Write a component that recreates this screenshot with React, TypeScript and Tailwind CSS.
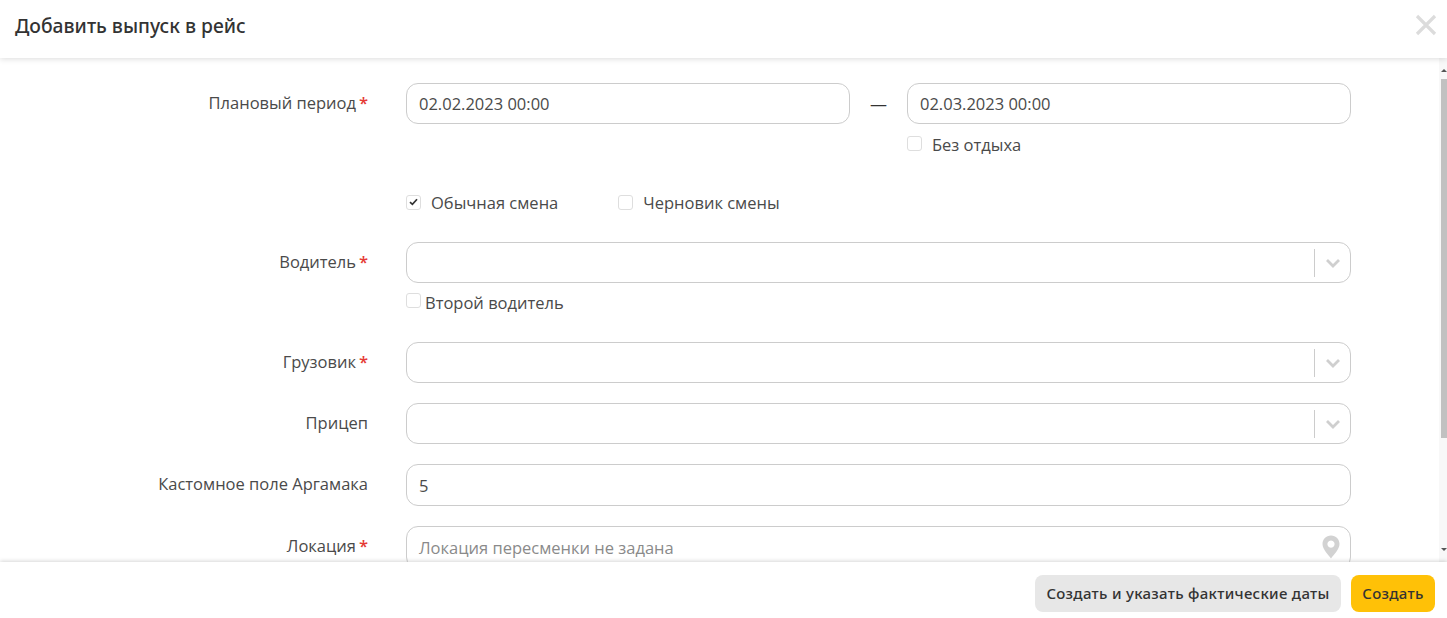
import React from "react";

const font = { fontFamily: '"Open Sans", "Noto Sans", sans-serif' };

function Label({ text, required }: { text: string; required?: boolean }) {
  return (
    <div className="w-[369px] shrink-0 h-[41px] flex items-center justify-end pr-[1px] text-[16.5px] text-[#4a4a4a]">
      <span>{text}</span>
      {required && <span className="ml-[3px] text-[#e53935] w-[9px] font-semibold">*</span>}
    </div>
  );
}

function Box({ checked }: { checked?: boolean }) {
  return (
    <span className="w-[15px] h-[15px] shrink-0 rounded-[3px] border border-[#dedede] bg-white flex items-center justify-center">
      {checked && (
        <svg width="9" height="8" viewBox="0 0 9 8">
          <path d="M1 4.2 L3.4 6.4 L8 1.2" fill="none" stroke="#333" strokeWidth="1.7" />
        </svg>
      )}
    </span>
  );
}

function SelectBox() {
  return (
    <div className="w-[945px] h-[41px] rounded-[12px] border border-[#cccccc] bg-white flex items-center justify-end">
      <span className="w-px h-[28px] bg-[#cccccc]" />
      <span className="w-[35px] flex justify-center">
        <svg width="16" height="10" viewBox="0 0 16 10">
          <path d="M2 2 L8 8 L14 2" fill="none" stroke="#cfcfcf" strokeWidth="2.8" />
        </svg>
      </span>
    </div>
  );
}

function TextBox({ value, width = "w-[945px]", height = "h-[41px]" }: { value: string; width?: string; height?: string }) {
  return (
    <div className={`${width} ${height} rounded-[12px] border border-[#cccccc] bg-white flex items-center pl-[12px] pr-[12px] pt-[2px] text-[16.5px] text-[#4a4a4a]`}>
      {value}
    </div>
  );
}

export default function App() {
  return (
    <div className="w-[1447px] h-[618px] bg-white flex flex-col overflow-hidden" style={font}>
      <header className="relative z-10 h-[58px] shrink-0 flex items-center justify-between pl-[15px] pr-[10px] pb-[6px] bg-white shadow-[0_1px_6px_rgba(0,0,0,0.14)]">
        <h1 className="text-[19.3px] text-[#333333]" style={{ fontFamily: '"Noto Sans", sans-serif', fontWeight: 500 }}>
          Добавить выпуск в рейс
        </h1>
        <svg width="22" height="22" viewBox="0 0 22 22" className="mb-[2px]">
          <path d="M2 2 L20 20 M20 2 L2 20" stroke="#dcdcdc" strokeWidth="3.2" />
        </svg>
      </header>

      <main className="flex-1 min-h-0 flex overflow-hidden">
        <div className="flex-1 pt-[25px]">
          <div className="flex gap-[37px]">
            <Label text="Плановый период" required />
            <div className="flex items-start">
              <TextBox value="02.02.2023 00:00" width="w-[444px]" />
              <span className="w-[57px] h-[41px] flex items-center justify-center text-[17px] text-[#333333]">—</span>
              <div>
                <TextBox value="02.03.2023 00:00" width="w-[444px]" />
                <label className="mt-[12px] flex items-start h-[17px] text-[16.5px] text-[#4a4a4a]">
                  <Box />
                  <span className="ml-[10px] leading-[17px]">Без отдыха</span>
                </label>
              </div>
            </div>
          </div>

          <div className="mt-[39px] ml-[406px] flex items-center h-[20px] text-[16.5px] text-[#4a4a4a]">
            <Box checked />
            <span className="ml-[10px] pt-[2px]">Обычная смена</span>
            <span className="ml-[60px]"><Box /></span>
            <span className="ml-[10px] pt-[2px]">Черновик смены</span>
          </div>

          <div className="mt-[30px] flex gap-[37px]">
            <Label text="Водитель" required />
            <div>
              <SelectBox />
              <label className="mt-[10px] flex items-start h-[20px] text-[16.5px] text-[#4a4a4a]">
                <Box />
                <span className="ml-[4px] leading-[20px]">Второй водитель</span>
              </label>
            </div>
          </div>

          <div className="mt-[29px] flex gap-[37px]">
            <Label text="Грузовик" required />
            <SelectBox />
          </div>
          <div className="mt-[20px] flex gap-[37px]">
            <Label text="Прицеп" />
            <SelectBox />
          </div>
          <div className="mt-[20px] flex gap-[37px]">
            <Label text="Кастомное поле Аргамака" />
            <TextBox value="5" height="h-[42px]" />
          </div>
          <div className="mt-[20px] flex gap-[37px]">
            <Label text="Локация" required />
            <div className="w-[945px] h-[43px] shrink-0 rounded-[12px] border border-[#cccccc] bg-white flex items-center justify-between pl-[12px] pr-[10px] text-[16.5px] text-[#8a8a8a]">
              <span className="pt-[2px]">Локация пересменки не задана</span>
              <svg width="18" height="24" viewBox="0 0 18 24" className="mb-[1px]">
                <path fillRule="evenodd" d="M9 0.5 C4 0.5 0.5 4.3 0.5 9 C0.5 14.5 6.5 20 9 23.5 C11.5 20 17.5 14.5 17.5 9 C17.5 4.3 14 0.5 9 0.5 Z M9 5.5 A3.6 3.6 0 1 1 8.99 5.5 Z" fill="#d2d2d2" />
              </svg>
            </div>
          </div>
        </div>

        <div className="w-[8px] shrink-0 bg-[#f8f8f8] flex flex-col items-end">
          <div className="h-[21px] w-full flex items-end justify-end pb-[7px]">
            <span className="w-0 h-0 border-x-[3px] border-x-transparent border-b-[3px] border-b-[#555555]" />
          </div>
          <div className="w-[6px] h-[359px] bg-[#c1c1c1]" />
          <div className="mt-[110px] w-full flex justify-end">
            <span className="w-0 h-0 border-x-[3px] border-x-transparent border-t-[3px] border-t-[#555555]" />
          </div>
        </div>
      </main>

      <footer className="relative z-10 h-[56px] shrink-0 bg-white flex items-start justify-end gap-[10px] pt-[13px] pr-[12px] shadow-[0_-1px_4px_rgba(0,0,0,0.16)]" style={{ fontFamily: '"Noto Sans", sans-serif' }}>
        <button className="h-[37px] w-[306px] rounded-[8px] bg-[#e7e7e7] text-[15px] font-medium tracking-[0.3px] text-[#333333]">
          Создать и указать фактические даты
        </button>
        <button className="h-[37px] w-[84px] rounded-[8px] bg-[#ffc107] text-[15px] font-medium tracking-[0.3px] text-[#333333]">
          Создать
        </button>
      </footer>
    </div>
  );
}
